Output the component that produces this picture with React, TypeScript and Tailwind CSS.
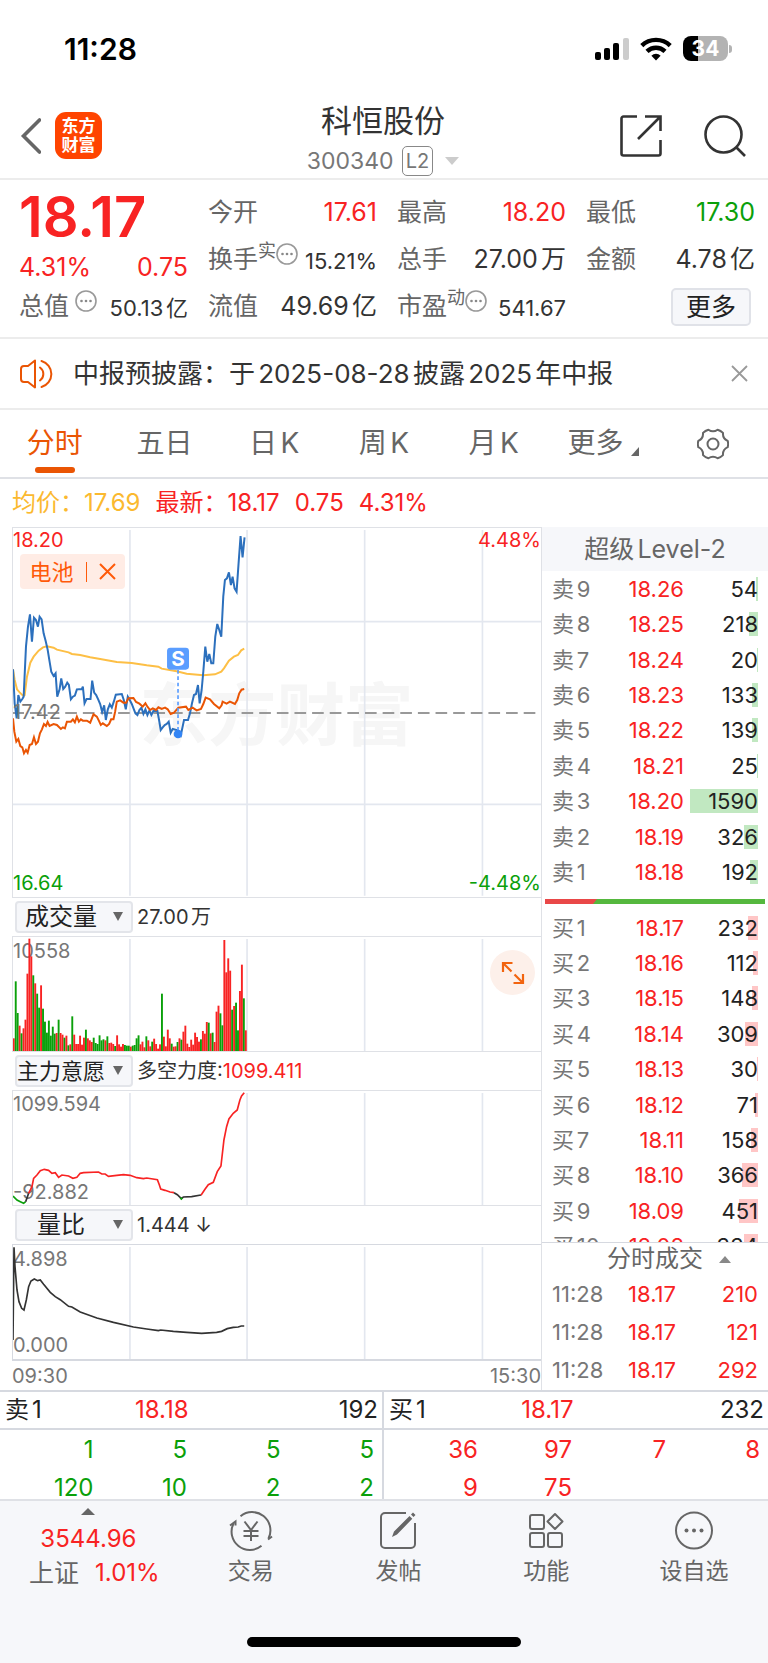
import React, { useState } from "react";
import clsx from "clsx";

interface Level {
  label: string;
  price: string;
  volume: number;
}

const asks: Array<Level> = [
  { label: "卖9", price: "18.26", volume: 54 },
  { label: "卖8", price: "18.25", volume: 218 },
  { label: "卖7", price: "18.24", volume: 20 },
  { label: "卖6", price: "18.23", volume: 133 },
  { label: "卖5", price: "18.22", volume: 139 },
  { label: "卖4", price: "18.21", volume: 25 },
  { label: "卖3", price: "18.20", volume: 1590 },
  { label: "卖2", price: "18.19", volume: 326 },
  { label: "卖1", price: "18.18", volume: 192 },
];

const bids: Array<Level> = [
  { label: "买1", price: "18.17", volume: 232 },
  { label: "买2", price: "18.16", volume: 112 },
  { label: "买3", price: "18.15", volume: 148 },
  { label: "买4", price: "18.14", volume: 309 },
  { label: "买5", price: "18.13", volume: 30 },
  { label: "买6", price: "18.12", volume: 71 },
  { label: "买7", price: "18.11", volume: 158 },
  { label: "买8", price: "18.10", volume: 366 },
  { label: "买9", price: "18.09", volume: 451 },
  { label: "买10", price: "18.08", volume: 334 },
];

const trades = [
  { time: "11:28", price: "18.17", volume: 210 },
  { time: "11:28", price: "18.17", volume: 121 },
  { time: "11:28", price: "18.17", volume: 292 },
];

const tabs = ["分时", "五日", "日K", "周K", "月K", "更多"];

// one entry per minute, negative means the minute closed down
const volumes = [
  38, -209, -114, 76, -53, 68, 94, 232, 337, 284, -227, 203, -172, -130, 197,
  -127, -88, -55, -91, -46, -73, -52, 54, -94, 54, 49, -40, 46, -17, 20, -104,
  49, 21, 21, 46, 19, 40, -64, 38, 32, 27, -40, -24, -21, -47, -32, -35, 32,
  -44, 24, 25, 21, -15, 47, 20, 13, 21, -18, -16, -16, 13, -16, -18, -38, -47,
  20, 28, 11, -44, 32, 14, -28, 37, 21, 7, 20, -172, 43, 14, 64, 38, -22, 13,
  14, -27, 38, -34, 58, 76, 22, 12, 34, 19, 55, 42, 28, -35, 60, 52, 87, -85,
  53, -55, 27, 118, 136, -113, -77, 333, 236, 278, 241, -124, 135, -145, -62,
  180, 259, -158, 62,
];

const priceLine =
  "38,448 43,550 49,595 54,525 60,545 66,537 70,530 77,380 83,320 89,283 95,365 101,293 107,300 113,320 118,290 124,298 130,340 136,362 142,388 148,425 153,455 160,468 166,460 171,530 178,508 183,475 189,507 195,500 201,488 206,495 212,538 218,530 224,527 230,508 245,507 248,500 253,550 259,537 271,537 276,482 282,518 288,525 294,538 300,552 306,576 312,556 317,600 323,568 329,553 335,563 341,545 347,524 365,522 371,540 377,568 383,530 389,540 395,552 406,580 412,585 418,570 424,563 430,582 436,568 442,585 448,572 454,585 460,573 472,573 477,600 482,630 488,622 494,615 500,612 506,605 512,638 518,627 530,630 536,643 542,648 552,600 564,600 570,580 576,550 582,525 588,522 594,495 599,550 605,510 610,455 616,380 622,425 628,402 634,430 640,430 646,350 652,312 658,330 664,350 670,230 675,180 681,175 687,157 693,195 698,170 704,205 710,215 716,130 722,48 728,112 734,52";

const averageLine =
  "38,448 43,480 50,508 58,517 68,527 73,525 80,470 90,428 100,410 115,392 128,382 140,379 160,383 170,389 205,397 215,402 240,405 270,412 300,417 350,426 395,429 440,436 475,440 485,446 530,454 560,461 610,466 645,463 664,455 672,445 687,422 702,410 714,405 724,391 733,386";

const sectorLine =
  "38,595 42,635 48,665 54,657 60,678 66,682 71,700 77,690 82,698 88,675 95,672 101,652 107,672 113,665 119,640 125,628 131,612 137,618 142,606 148,618 160,612 170,615 182,627 188,622 194,625 200,605 212,605 218,598 224,607 230,590 236,605 242,598 248,602 260,602 270,608 280,583 290,590 296,602 302,615 308,610 320,618 327,612 333,598 340,598 345,575 350,545 360,541 370,548 378,548 385,535 400,534 408,546 418,551 428,560 436,550 442,560 450,570 458,565 468,570 475,562 485,567 495,563 503,568 512,582 522,578 535,563 558,560 565,570 578,563 590,571 603,567 610,552 617,533 630,538 642,552 658,565 665,556 668,545 680,551 690,545 705,552 712,540 718,520 725,509 733,507";

const ratioLine =
  "38,450 41,172 44,230 50,300 56,335 64,355 71,360 78,330 85,290 92,273 102,267 112,272 120,270 130,283 150,307 165,320 180,329 205,349 215,351 240,366 290,384 340,397 400,411 440,417 475,422 482,420 520,424 560,427 605,430 650,427 665,424 682,416 700,412 715,411 724,408 733,408";

const forceLines = [
  { color: "#0aa00a", points: "38,888 50,900 60,905 70,910 76,905" },
  { color: "#333333", points: "76,905 85,880" },
  {
    color: "#f82323",
    points:
      "85,880 95,860 100,835 110,825 120,812 132,808 145,811 155,820 165,818 175,832 185,825 205,828 218,835 230,832 240,820 250,818 295,816 305,822 315,822 325,829 350,826 370,824 390,826 410,833 430,836 440,834 472,839 478,855 482,867 495,871 510,876 522,878",
  },
  {
    color: "#333333",
    points: "522,878 532,884 544,896 550,891 575,890 603,885",
  },
  { color: "#0aa00a", points: "541,893 544,897 547,894" },
  {
    color: "#f82323",
    points:
      "603,886 615,868 625,854 640,847 652,815 663,798 672,720 680,680 687,657 700,640 712,630 720,600 725,588 733,578",
  },
];

const StatusBar = () => (
  <div className="flex h-[93px] items-center justify-between pl-16 pr-9 text-black">
    <span className="pt-1 text-[30px] leading-9 font-semibold">11:28</span>
    <div className="flex items-center gap-[11px] pt-1">
      <svg width="34" height="24" viewBox="0 0 34 24">
        <rect x="0" y="15" width="6" height="8" rx="2" />
        <rect x="9" y="11" width="6" height="12" rx="2" />
        <rect x="18" y="6" width="6" height="17" rx="2" />
        <rect x="28" y="1" width="6" height="22" rx="2" fill="#cccccc" />
      </svg>
      <svg width="32" height="24" viewBox="0 0 32 24" fill="none" stroke="#000" strokeWidth="4.4">
        <path d="M1.8 8.6a20.5 20.5 0 0 1 28.4 0" />
        <path d="M7 14.4a13 13 0 0 1 18 0" />
        <path d="M16 23.5l-4.6-4.8a6.6 6.6 0 0 1 9.2 0z" fill="#000" stroke="none" />
      </svg>
      <div className="flex items-center gap-px">
        <div className="flex h-[25px] w-[45px] items-center justify-center rounded-lg bg-linear-to-r from-black from-34% to-[#b3b3b3] to-34% text-[21px] leading-6 font-bold text-white">
          34
        </div>
        <div className="h-2 w-[3px] rounded-r-full bg-[#b3b3b3]"></div>
      </div>
    </div>
  </div>
);

const Header = () => (
  <header className="grid h-[87px] grid-cols-[1fr_auto_1fr] items-center border-b-2 border-[#ececec] pr-[22px] pl-5">
    <div className="flex items-center gap-[14px]">
      <button aria-label="返回">
        <svg width="21" height="36" viewBox="0 0 21 36" fill="none" stroke="#666" strokeWidth="3.6">
          <path d="M19.500 2 3.500 18l16 16" strokeLinecap="round" />
        </svg>
      </button>
      <a
        href="#home"
        className="flex size-[47px] flex-col items-center justify-center rounded-[11px] bg-[#ff4400] text-[17px] leading-[19px] font-bold text-white"
      >
        <span>东方</span>
        <span>财富</span>
      </a>
    </div>
    <div className="flex flex-col items-center gap-1 pt-[6px]">
      <h1 className="text-[31px] leading-10 text-[#333]">科恒股份</h1>
      <div className="flex items-center gap-2 text-[23px] leading-8 text-[#777]">
        <span>300340</span>
        <span className="rounded-[5px] border border-[#888] px-[3px] text-xl leading-7">L2</span>
        <svg width="14" height="8" viewBox="0 0 14 8" fill="#cccccc" className="ml-1">
          <path d="M0 0h14L7 8z" />
        </svg>
      </div>
    </div>
    <div className="flex justify-end gap-[42px]">
      <button aria-label="分享">
        <svg width="42" height="42" viewBox="0 0 42 42" fill="none" stroke="#333" strokeWidth="2.6">
          <path d="M17 1.500H3.500A2 2 0 0 0 1.500 3.500V38.500A2 2 0 0 0 3.500 40.500H38.500A2 2 0 0 0 40.500 38.500V25" />
          <path d="M25 1.500H40.500V16M40 2 18 24" />
        </svg>
      </button>
      <button aria-label="搜索">
        <svg width="42" height="42" viewBox="0 0 42 42" fill="none" stroke="#333" strokeWidth="2.6">
          <circle cx="19.500" cy="19.500" r="18" />
          <path d="m32 32 9 9" />
        </svg>
      </button>
    </div>
  </header>
);

const InfoDot = () => (
  <svg width="22" height="22" viewBox="0 0 22 22" fill="#888" className="shrink-0">
    <circle cx="11" cy="11" r="10" fill="none" stroke="#999" strokeWidth="1.6" />
    <circle cx="6.500" cy="11" r="1.300" />
    <circle cx="11" cy="11" r="1.300" />
    <circle cx="15.500" cy="11" r="1.300" />
  </svg>
);

interface QuoteProps {
  label: string;
  value: string;
  sup?: string;
  info?: boolean;
  color?: string;
}

const Quote = ({ label, value, sup, info, color = "text-[#333]" }: QuoteProps) => (
  <div className="flex h-9 items-center justify-between whitespace-nowrap">
    <div className="flex h-9 text-[25px] leading-9 text-[#666]">
      {label}
      {sup && <span className="text-lg leading-5">{sup}</span>}
      {info && <span className={clsx("pt-[2px]", !sup && "pl-[6px]")}><InfoDot /></span>}
    </div>
    <span className={clsx(color, info ? "pt-1 text-[22px]" : "text-[25px]", "leading-8")}>
      {value}
    </span>
  </div>
);

const Summary = () => (
  <section className="grid h-[159px] grid-cols-4 gap-x-5 border-b-2 border-[#ececec] pt-[14px] pr-[13px] pl-[19px]">
    <div className="flex flex-col">
      <strong className="h-[51px] text-[56px] leading-[46px] font-semibold text-[#f82323]">
        18.17
      </strong>
      <div className="flex h-[43px] items-center justify-between text-[25px] leading-8 text-[#f82323]">
        <span>4.31%</span>
        <span>0.75</span>
      </div>
      <Quote label="总值" value="50.13亿" info />
    </div>
    <div className="col-span-3 grid grid-cols-3 content-start gap-x-5 gap-y-[11px]">
      <Quote label="今开" value="17.61" color="text-[#f82323]" />
      <Quote label="最高" value="18.20" color="text-[#f82323]" />
      <Quote label="最低" value="17.30" color="text-[#0aa00a]" />
      <Quote label="换手" value="15.21%" sup="实" info />
      <Quote label="总手" value="27.00万" />
      <Quote label="金额" value="4.78亿" />
      <Quote label="流值" value="49.69亿" />
      <Quote label="市盈" value="541.67" sup="动" info />
      <div className="flex justify-end pr-1">
        <button className="h-[38px] w-20 rounded-[5px] border-2 border-[#e0e2e8] bg-[#f6f7fa] text-[25px] leading-8 text-[#222]">
          更多
        </button>
      </div>
    </div>
  </section>
);

const Notice = () => (
  <section className="flex h-[71px] items-center border-b-2 border-[#ececec] pr-5 pl-5">
    <svg width="33" height="30" viewBox="0 0 33 30" fill="none" stroke="#ea5504" strokeWidth="2">
      <path d="M8 7H4a3 3 0 0 0-3 3v10a3 3 0 0 0 3 3h4l7 5.500V1.500z" strokeLinejoin="round" />
      <path d="M20 8.500a8 8 0 0 1 0 13M21.500 2a13.500 13.500 0 0 1 0 26" strokeLinecap="round" />
    </svg>
    <p className="flex-1 pl-5 text-[26px] leading-8 text-[#333]">
      中报预披露：于2025-08-28披露2025年中报
    </p>
    <button aria-label="关闭">
      <svg width="17" height="17" viewBox="0 0 17 17" stroke="#999" strokeWidth="1.8">
        <path d="m1 1 15 15M16 1 1 16" />
      </svg>
    </button>
  </section>
);

const Tabs = () => {
  const [active, setActive] = useState("分时");

  return (
    <nav className="grid h-[69px] grid-cols-7 border-b-2 border-[#dfe1e6]">
      {tabs.map((tab) => (
        <button
          key={tab}
          onClick={() => setActive(tab)}
          className={clsx(
            "flex flex-col items-center pt-3 text-[28px] leading-[42px]",
            tab === active ? "text-[#ea5504]" : "text-[#666]"
          )}
        >
          <span className="flex items-end gap-2">
            {tab}
            {tab === "更多" && (
              <svg width="8" height="20" viewBox="0 0 8 20" fill="#666">
                <path d="M8 3v9H0z" />
              </svg>
            )}
          </span>
          {tab === active && <span className="mt-[3px] h-[6px] w-10 rounded-full bg-[#ea5504]"></span>}
        </button>
      ))}
      <button aria-label="设置" className="flex items-center justify-center">
        <svg width="32" height="32" viewBox="0 0 32 32" fill="none" stroke="#666" strokeWidth="2" strokeLinejoin="round">
          <path d="M30.700 12.900Q31.600 16 30.700 19.100Q25.500 21.500 26 27.100Q23.700 29.400 20.600 30.300Q16 27 11.400 30.300Q8.300 29.400 6 27.100Q6.500 21.500 1.300 19.100Q.4 16 1.300 12.900Q6.500 10.500 6 4.900Q8.300 2.600 11.400 1.700Q16 5 20.600 1.700Q23.700 2.600 26 4.900Q25.500 10.500 30.700 12.900z" />
          <circle cx="16" cy="16" r="5.500" />
        </svg>
      </button>
    </nav>
  );
};

// vertical time grid shared by all four charts
const TimeGrid = ({ top, bottom }: { top: number; bottom: number }) => (
  <g stroke="#e3e7ef" strokeWidth="5">
    {[389.5, 741.5, 1095, 1449].map((x) => (
      <line key={x} x1={x} x2={x} y1={top} y2={bottom} />
    ))}
  </g>
);

const PriceChart = () => (
  <div className="relative h-[371px] border-y border-l border-[#dfe1e6] text-xl leading-6">
    <svg viewBox="38 24 1587 1107" preserveAspectRatio="none" className="block h-full w-full" fill="none">
      <text x="418" y="661" fontSize="206" fontWeight="700" fill="#f6f6f6">
        东方财富
      </text>
      <TimeGrid top={30} bottom={1127} />
      <path d="M36 305H1626M36 853H1626" stroke="#e3e7ef" strokeWidth="5" />
      <path d="M36 579H1626" stroke="#999999" strokeWidth="6" strokeDasharray="35 18" />
      <polyline points={averageLine} stroke="#fdbf45" strokeWidth="6" />
      <polyline points={priceLine} stroke="#2c70bd" strokeWidth="6" />
      <polyline points={sectorLine} stroke="#ea5504" strokeWidth="6" />
      <path d="M534 450V640" stroke="#5a9dff" strokeWidth="5" strokeDasharray="11 8" />
      <circle cx="534" cy="642" r="13" fill="#3385f5" />
      <rect x="501" y="383" width="66" height="66" rx="10" fill="#5a9dff" />
      <text x="534" y="438" fontSize="62" fontWeight="700" fill="#ffffff" textAnchor="middle">
        S
      </text>
    </svg>
    <span className="absolute top-0 left-0 text-[#f82323]">18.20</span>
    <span className="absolute top-0 right-0 text-[#f82323]">4.48%</span>
    <span className="absolute top-[172px] left-0 text-[#777]">17.42</span>
    <span className="absolute bottom-[2px] left-0 text-[#0aa00a]">16.64</span>
    <span className="absolute right-0 bottom-[2px] text-[#0aa00a]">-4.48%</span>
    <button className="absolute top-[26px] left-[7px] flex h-[35px] w-[105px] items-center justify-center gap-3 rounded bg-[#ffece5] text-[22px] text-[#ff5a0a]">
      电池
      <span className="h-5 w-px bg-[#ff5a0a]"></span>
      <svg width="17" height="17" viewBox="0 0 17 17" stroke="#ff5a0a" strokeWidth="2">
        <path d="m1 1 15 15M16 1 1 16" />
      </svg>
    </button>
  </div>
);

interface IndicatorProps {
  name: string;
  options: Array<string>;
  children: React.ReactNode;
}

const IndicatorBar = ({ name, options, children }: IndicatorProps) => (
  <div className="flex h-[38px] items-center gap-1 pl-[3px] text-xl leading-7 text-[#333]">
    <div className="relative">
      <select
        aria-label="指标"
        defaultValue={name}
        className={clsx(
          "block h-8 w-[118px] appearance-none rounded border-2 border-[#e3e5ea] bg-[#f6f7fa] pr-[26px] text-center leading-7 text-[#222]",
          name.length > 3 ? "text-[22px]" : "text-2xl"
        )}
      >
        {options.map((option) => (
          <option key={option}>{option}</option>
        ))}
      </select>
      <svg width="10" height="9" viewBox="0 0 10 9" fill="#666" className="pointer-events-none absolute top-[11px] right-[10px]">
        <path d="M0 0h10L5 9z" />
      </svg>
    </div>
    {children}
  </div>
);

const options = ["成交量", "主力意愿", "量比"];

const Charts = () => (
  <div className="min-w-0 flex-1 border-r border-[#dfe1e6] pl-3">
    <PriceChart />
    <IndicatorBar name="成交量" options={options}>
      <span>27.00万</span>
    </IndicatorBar>
    <div className="relative h-[116px] border-y border-l border-[#dfe1e6] text-xl leading-6 text-[#777]">
      <span className="absolute top-[2px] left-0">10558</span>
      <svg viewBox="38 111 1587 342" preserveAspectRatio="none" className="relative block h-full w-full">
        <TimeGrid top={117} bottom={453} />
        {volumes.map((v, i) => (
          <rect
            key={i}
            x={37.5 + i * 5.86}
            y={453 - Math.abs(v)}
            width="5.7"
            height={Math.abs(v)}
            fill={v > 0 ? "#f82323" : "#0aa00a"}
          />
        ))}
      </svg>
      <button
        aria-label="全屏"
        className="absolute top-[13px] right-[6px] flex size-[45px] items-center justify-center rounded-full bg-[#fdf0ea]"
      >
        <svg width="24" height="24" viewBox="0 0 24 24" fill="none" stroke="#f2640f" strokeWidth="2.2">
          <path d="M11.500 2H2v9M2.500 2.500l8 8M22 13v9h-9.500M13.500 13.500l8 8" />
        </svg>
      </button>
    </div>
    <IndicatorBar name="主力意愿" options={options}>
      <span>
        多空力度:<span className="text-[#f82323]">1099.411</span>
      </span>
    </IndicatorBar>
    <div className="relative h-[116px] border-y border-l border-[#dfe1e6] text-xl leading-6 text-[#777]">
      <span className="absolute top-[1px] left-0">1099.594</span>
      <span className="absolute bottom-[1px] left-0">-92.882</span>
      <svg viewBox="38 573 1587 342" preserveAspectRatio="none" className="relative block h-full w-full" fill="none">
        <TimeGrid top={579} bottom={915} />
        {forceLines.map((line) => (
          <polyline key={line.points} points={line.points} stroke={line.color} strokeWidth="5" />
        ))}
      </svg>
    </div>
    <IndicatorBar name="量比" options={options}>
      <span>1.444 ↓</span>
    </IndicatorBar>
    <div className="relative h-[117px] border-t border-b-2 border-l border-[#d6d9e0] text-xl leading-6 text-[#777]">
      <span className="absolute top-[2px] left-0">4.898</span>
      <span className="absolute bottom-[2px] left-0">0.000</span>
      <svg viewBox="38 165 1587 342" preserveAspectRatio="none" className="relative block h-full w-full" fill="none">
        <TimeGrid top={171} bottom={507} />
        <polyline points={ratioLine} stroke="#333333" strokeWidth="5" />
      </svg>
    </div>
    <div className="flex h-[29px] items-center justify-between text-xl leading-6 text-[#777]">
      <span>09:30</span>
      <span>15:30</span>
    </div>
  </div>
);

const LevelRows = ({ levels, barColor }: { levels: Array<Level>; barColor: string }) => (
  <tbody>
    {levels.map(({ label, price, volume }) => (
      <tr key={label}>
        <td className="w-[60px] p-0 text-[#777]">{label}</td>
        <td className="p-0 text-right text-[#f82323]">{price}</td>
        <td className="w-[74px] p-0 text-[#222]">
          <div className="relative text-right">
            <div
              className={clsx("absolute top-0 right-0 h-6", barColor)}
              style={{ width: Math.max(1, Math.round(volume * 0.043)) }}
            ></div>
            <span className="relative">{volume}</span>
          </div>
        </td>
      </tr>
    ))}
  </tbody>
);

const OrderBook = () => (
  <aside className="flex w-[226px] flex-col text-[22px] leading-6">
    <h2 className="h-11 bg-[#f6f7fa] text-center text-[25px] leading-[44px] text-[#666]">超级Level-2</h2>
    <div className="px-[10px]">
      <table className="h-[319px] w-full border-collapse">
        <LevelRows levels={asks} barColor="bg-[#c1e8c1]" />
      </table>
    </div>
    <div className="mx-[3px] mt-[9px] mb-[6px] flex h-[5px] bg-[#55b83e]">
      <svg width="52" height="5" viewBox="0 0 52 5" fill="#e94848">
        <path d="M0 0h52l-4 5H0z" />
      </svg>
    </div>
    <div className="h-[333px] overflow-hidden border-b border-[#d6d9e0] px-[10px]">
      <table className="h-[354px] w-full border-collapse">
        <LevelRows levels={bids} barColor="bg-[#ffc6c6]" />
      </table>
    </div>
    <button className="flex h-8 items-center justify-center gap-4 pl-7 text-2xl leading-8 text-[#666]">
      分时成交
      <svg width="12" height="7" viewBox="0 0 12 7" fill="#888">
        <path d="M0 7h12L6 0z" />
      </svg>
    </button>
    <div className="px-[10px]">
      <table className="h-[114px] w-full border-collapse">
        <tbody>
          {trades.map((trade, i) => (
            <tr key={i}>
              <td className="w-[60px] p-0 text-[#777]">{trade.time}</td>
              <td className="p-0 pr-2 text-right text-[#f82323]">{trade.price}</td>
              <td className="w-[74px] p-0 text-right text-[#f82323]">{trade.volume}</td>
            </tr>
          ))}
        </tbody>
      </table>
    </div>
  </aside>
);

interface QueueProps {
  label: string;
  price: string;
  volume: string;
  color: string;
  orders: Array<string>;
}

const Queue = ({ label, price, volume, color, orders }: QueueProps) => (
  <div className="border-[#d6d9e0] text-2xl leading-8 not-last:border-r-2">
    <div className="grid h-[38px] grid-cols-[92fr_92fr_190fr] items-center border-b-2 border-[#d6d9e0] pr-1 pl-[5px] text-[#222]">
      <span>{label}</span>
      <span className="text-right text-[#f82323]">{price}</span>
      <span className="text-right">{volume}</span>
    </div>
    <div className={clsx("grid h-[69px] grid-cols-4 content-start gap-y-[6px] pt-1 pr-2 text-right", color)}>
      {orders.map((order, i) => (
        <span key={i}>{order}</span>
      ))}
    </div>
  </div>
);

const NavItem = ({ label, children }: { label: string; children: React.ReactNode }) => (
  <button className="flex flex-col items-center gap-1 pt-[10px] text-[23px] leading-8 text-[#666]">
    <svg width="44" height="40" viewBox="0 0 44 40" fill="none" stroke="#666" strokeWidth="2">
      {children}
    </svg>
    {label}
  </button>
);

const BottomNav = () => (
  <footer className="flex h-[165px] flex-col justify-between border-t-2 border-[#dfe1e6] bg-[#f6f7fa] pb-[17px]">
    <div className="grid grid-cols-[177fr_148fr_148fr_148fr_148fr] items-start">
      <button className="flex flex-col items-center pt-[7px] text-2xl leading-8 whitespace-nowrap text-[#f82323]">
        <svg width="14" height="7" viewBox="0 0 14 7" fill="#666">
          <path d="M0 7h14L7 0z" />
        </svg>
        <span className="pt-2">3544.96</span>
        <span className="flex gap-4 pt-[2px] pl-3">
          <span className="text-[25px] text-[#666]">上证</span>
          1.01%
        </span>
      </button>
      <NavItem label="交易">
        <path d="M11.500 5.200A18.300 18.300 0 0 1 39.500 27.500M32.500 34.800A18.300 18.300 0 0 1 4.500 12.500" />
        <path d="M43 25.500 39 28.500M1 14.500 6.500 10.500V14.500" />
        <path d="m15.500 10.500 6.500 8.500 6.500-8.500M22 19v11M14.500 20h15M14.500 25h15" />
      </NavItem>
      <NavItem label="发帖">
        <path d="M30 2H9a4 4 0 0 0-4 4v27a4 4 0 0 0 4 4h26a4 4 0 0 0 4-4V12" />
        <path d="m16 26 2-5.500L33.500 5l2.800 2.800L21 23.500zM35 3.500 37 1.500l2.500 2.500-2 2z" fill="#666" stroke="none" />
      </NavItem>
      <NavItem label="功能">
        <rect x="6" y="4" width="14" height="14" rx="2" />
        <rect x="6" y="22" width="14" height="14" rx="2" />
        <rect x="24" y="22" width="14" height="14" rx="2" />
        <path d="m31 3 7.500 7.500-7.500 7.500-7.500-7.500z" strokeLinejoin="round" />
      </NavItem>
      <NavItem label="设自选">
        <circle cx="22" cy="19.500" r="18" />
        <g fill="#666" stroke="none">
          <circle cx="14.500" cy="19.500" r="2" />
          <circle cx="22" cy="19.500" r="2" />
          <circle cx="29.500" cy="19.500" r="2" />
        </g>
      </NavItem>
    </div>
    <div className="mx-auto h-[10px] w-[274px] rounded-full bg-black"></div>
  </footer>
);

const App = () => {
  return (
    <div className="min-w-[700px] bg-white font-[Inter,'Noto_Sans_CJK_SC',sans-serif] [text-autospace:normal]">
      <StatusBar />
      <Header />
      <Summary />
      <Notice />
      <Tabs />
      <div className="flex h-12 items-center gap-[15px] px-3 text-2xl leading-8 text-[#f82323]">
        <span className="text-[#fbb92f]">均价：17.69</span>
        <span>最新：18.17</span>
        <span>0.75</span>
        <span>4.31%</span>
      </div>
      <main className="flex">
        <Charts />
        <OrderBook />
      </main>
      <section className="grid grid-cols-2 border-t-2 border-[#d6d9e0]">
        <Queue
          label="卖1"
          price="18.18"
          volume="192"
          color="text-[#0aa00a]"
          orders={["1", "5", "5", "5", "120", "10", "2", "2"]}
        />
        <Queue
          label="买1"
          price="18.17"
          volume="232"
          color="text-[#f82323]"
          orders={["36", "97", "7", "8", "9", "75"]}
        />
      </section>
      <BottomNav />
    </div>
  );
};

export default App;
